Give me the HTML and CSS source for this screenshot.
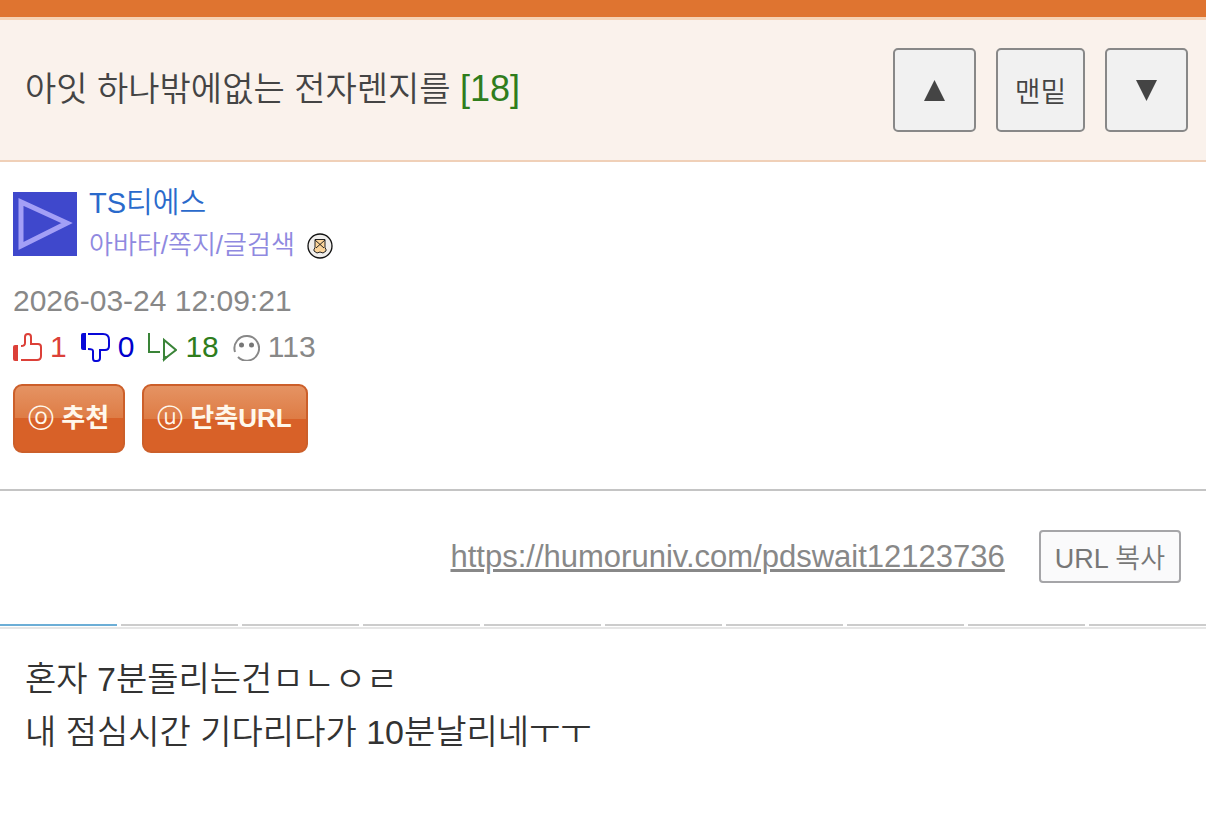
FILE: index.html
```html
<!DOCTYPE html>
<html lang="ko">
<head>
  <meta charset="UTF-8">
  <meta name="viewport" content="width=device-width, initial-scale=1.0">
  <title>아잇 하나밖에없는 전자렌지를</title>
  <link rel="stylesheet" href="styles.css">
</head>
<body>
  <header class="title-bar">
    <h1>아잇 하나밖에없는 전자렌지를 <span class="comment-count">[18]</span></h1>
    <nav class="move-buttons">
      <button type="button" aria-label="위로"><svg width="21" height="21" viewBox="0 0 22 22"><path d="M11 0L22 22H0z" fill="#444"/></svg></button>
      <button type="button" class="bottom">맨밑</button>
      <button type="button" aria-label="아래로"><svg width="21" height="21" viewBox="0 0 22 22"><path d="M0 0H22L11 22z" fill="#444"/></svg></button>
    </nav>
  </header>

  <section class="info">
    <div class="writer">
      <svg class="avatar" width="64" height="64" viewBox="0 0 64 64">
        <path d="M0 0H64V64H0z" fill="#3f48cc"/>
        <path d="M8 10V54L54 31z" fill="none" stroke="#a39ff6" stroke-width="5"/>
      </svg>
      <div>
        <a href="#" class="name">TS티에스</a>
        <div class="writer-menu">
          <a href="#">아바타/쪽지/글검색</a>
          <svg width="26" height="26" viewBox="0 0 26 26">
            <circle cx="13" cy="13" r="12" fill="#f0eeec" stroke="#111" stroke-width="1.3"/>
            <path d="M8 6.5H18V15L19 16V18L16 20L13 19L10 20L7 18V16L8 15z" fill="#fbd49a" stroke="#222"/>
            <path d="M8 7L17 15M18 7L9 15" stroke="#222"/>
          </svg>
        </div>
      </div>
    </div>

    <div class="date">2026-03-24 12:09:21</div>

    <div class="stats">
      <span class="stat good">
        <svg width="29" height="29" viewBox="0 0 29 29">
          <path d="M2 12H5V28H2Q0 28 0 26V14Q0 12 2 12z" fill="#dc4038"/>
          <path d="M8 13Q12 13 12 10V4Q12 1 15 1Q18 1 18 4V11H25Q28 11 28 14V23Q28 27 24 27H8" fill="none" stroke="#dc4038" stroke-width="2"/>
        </svg>1
      </span>
      <span class="stat bad">
        <svg width="29" height="29" viewBox="0 0 29 29">
          <path d="M2 0H5V17H2Q0 17 0 15V2Q0 0 2 0z" fill="#0808d8"/>
          <path d="M7 1H22Q28 1 28 7V13Q28 17 24 17H19V25Q19 28 16 28H14Q12 28 12 25V18Q12 16 7 16" fill="none" stroke="#0808d8" stroke-width="2"/>
        </svg>0
      </span>
      <span class="stat reply">
        <svg width="29" height="29" viewBox="0 0 29 29">
          <path d="M1 0V19H12M16 23V7L28 17L15 27" fill="none" stroke="#3a8438" stroke-width="2"/>
          <path d="M15 22L20 24L15 29z" fill="#3a8438"/>
        </svg>18
      </span>
      <span class="stat view">
        <svg width="27" height="27" viewBox="0 0 27 27">
          <path d="M2 18A12.300 12.300 0 1 1 5 23" fill="none" stroke="#888" stroke-width="2"/>
          <circle cx="8.5" cy="11" r="2.5" fill="#777"/>
          <circle cx="18.5" cy="11" r="2.5" fill="#777"/>
        </svg>113
      </span>
    </div>

    <div class="actions">
      <button type="button"><span>ⓞ</span> 추천</button>
      <button type="button"><span>ⓤ</span> 단축URL</button>
    </div>
  </section>

  <section class="share">
    <a href="https://humoruniv.com/pdswait12123736">https://humoruniv.com/pdswait12123736</a>
    <button type="button">URL 복사</button>
  </section>

  <div class="steps">
    <i class="on"></i><i></i><i></i><i></i><i></i><i></i><i></i><i></i><i></i><i></i>
  </div>

  <article class="content">
    혼자 7분돌리는건ㅁㄴㅇㄹ<br>
    내 점심시간 기다리다가 10분날리네ㅜㅜ
  </article>
</body>
</html>
```
FILE: styles.css
```css
body {
  margin: 0;
  font-family: "Liberation Sans", "Noto Sans CJK KR", sans-serif;
  font-weight: 350;
  color: #333;
  background: #fff;
}

button {
  box-sizing: border-box;
  font-family: inherit;
  font-weight: inherit;
  margin: 0;
  cursor: pointer;
}

a {
  text-decoration: none;
}

svg {
  flex: none;
}

/* title */
.title-bar {
  display: flex;
  justify-content: space-between;
  align-items: center;
  padding: 28px 18px 28px 25px;
  border-top: 17px solid #df7430;
  border-bottom: 2px solid #f0d0b8;
  background: #faf2ec;
  box-shadow: inset 0 3px #f6d2b4;
}

h1 {
  margin: 0;
  font-size: 34px;
  line-height: 50px;
  font-weight: inherit;
  color: #444;
}

.comment-count {
  font-size: 36px;
  color: #2f7d1c;
}

.move-buttons {
  display: flex;
  gap: 20px;
  padding-top: 3px;
}

.move-buttons button {
  display: flex;
  align-items: center;
  justify-content: center;
  width: 83px;
  height: 84px;
  padding: 0;
  border: 2px solid #888;
  border-radius: 5px;
  background: #f1f1f1;
  color: #444;
  font-size: 28px;
}

.move-buttons .bottom {
  width: 89px;
}

/* writer, date, counts */
.info {
  padding: 20px 13px 36px;
  border-bottom: 2px solid #c4c4c4;
}

.writer {
  display: flex;
  align-items: center;
  gap: 12px;
}

.name {
  display: block;
  font-size: 29px;
  line-height: 42px;
  color: #2a6acb;
}

.writer-menu {
  display: flex;
  align-items: center;
  gap: 12px;
  font-size: 26px;
  line-height: 42px;
}

.writer-menu a {
  color: #8f89e0;
}

.writer-menu svg {
  margin-top: 2px;
}

.date {
  margin-top: 12px;
  font-size: 30px;
  line-height: 46px;
  color: #888;
}

.stats {
  display: flex;
  gap: 14px;
  font-size: 30px;
  line-height: 46px;
}

.stat {
  display: flex;
  align-items: center;
  gap: 8px;
}

.good { color: #dc4038; }
.bad { color: #0000cc; }
.reply { color: #2f7d1c; }
.view { color: #888; }

.actions {
  display: flex;
  gap: 17px;
  margin-top: 14px;
}

.actions button {
  height: 69px;
  padding: 0 14px 4px 13px;
  border: 2px solid #cc5f2a;
  border-radius: 9px;
  background: linear-gradient(#e59363, #de7c45 50%, #d86128 50%, #d86128);
  color: #fff8ec;
  font-size: 26px;
  font-weight: bold;
}

.actions span {
  font-family: "DejaVu Sans", sans-serif;
  font-weight: normal;
}

/* short url */
.share {
  display: flex;
  justify-content: flex-end;
  align-items: center;
  gap: 34px;
  padding: 39px 25px 41px;
}

.share a {
  font-size: 31px;
  color: #888;
  text-decoration: underline;
}

.share button {
  height: 53px;
  padding: 0 14px;
  border: 2px solid #a5a5a8;
  border-radius: 4px;
  background: #fafafb;
  color: #777;
  font-size: 27px;
}

.steps {
  display: flex;
  gap: 4px;
  padding-bottom: 1px;
  border-bottom: 2px solid #e6e6e6;
}

.steps i {
  flex: 1;
  height: 2px;
  background: #ccc;
}

.steps .on {
  background: #6caed6;
}

.content {
  padding: 24px 25px;
  font-size: 34px;
  line-height: 53px;
}
```
